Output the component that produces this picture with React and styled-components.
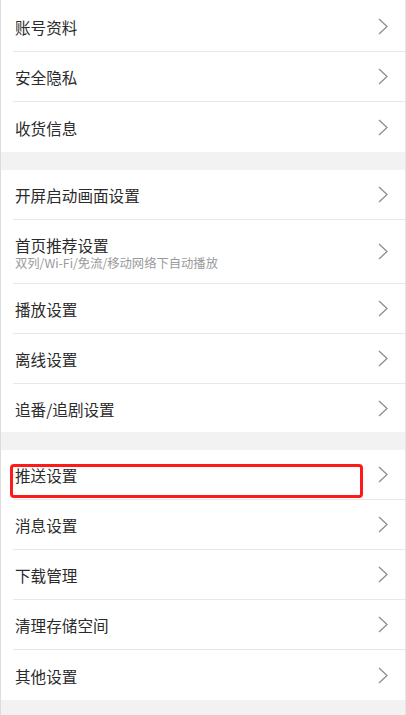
import React from "react";
import styled, { createGlobalStyle } from "styled-components";

const GlobalStyle = createGlobalStyle`
  body {
    margin: 0;
    background: #fff;
    font-family: "Noto Sans CJK SC", "Noto Sans", sans-serif;
  }
`;

const Page = styled.div`
  width: 404px;
  min-height: 715px;
  background: #f2f2f2;
  border-left: 1px solid #dcdcdc;
  border-right: 1px solid #e4e4e4;
  overflow: hidden;
`;

const Section = styled.div`
  background: #fff;
  padding-top: ${(p) => p.$top || 0}px;
  margin-bottom: 18px;
`;

const Item = styled.div`
  position: relative;
  padding-left: 12px;
`;

const ItemBody = styled.div`
  display: flex;
  align-items: center;
  justify-content: space-between;
  height: ${(p) => p.$h}px;
  padding: 0 17px 0 2px;
  border-bottom: ${(p) => (p.$last ? "none" : "1px solid #e8e8e8")};
`;

const TextBlock = styled.div`
  display: flex;
  flex-direction: column;
  padding-top: ${(p) => (p.$sub ? "3px" : "1px")};
`;

const Title = styled.span`
  font-size: 15.6px;
  line-height: 20px;
  color: #2b2b2b;
`;

const Sub = styled.span`
  font-size: 12.3px;
  line-height: 17px;
  color: #9a9a9a;
`;

const Highlight = styled.div`
  position: absolute;
  left: 9px;
  top: 14px;
  width: 347px;
  height: 28px;
  border: 3px solid #ff1a1a;
  border-radius: 4px;
  pointer-events: none;
`;

const Chevron = () => (
  <svg width="10" height="17" viewBox="0 0 10 17">
    <polyline
      points="1,1 9,8.5 1,16"
      fill="none"
      stroke="#8e8e8e"
      strokeWidth="1.3"
      strokeLinejoin="miter"
    />
  </svg>
);

const sections = [
  {
    top: 2,
    items: [{ title: "账号资料" }, { title: "安全隐私" }, { title: "收货信息" }],
  },
  {
    items: [
      { title: "开屏启动画面设置" },
      { title: "首页推荐设置", sub: "双列/Wi-Fi/免流/移动网络下自动播放", h: 64 },
      { title: "播放设置" },
      { title: "离线设置" },
      { title: "追番/追剧设置", h: 48 },
    ],
  },
  {
    items: [
      { title: "推送设置", marked: true },
      { title: "消息设置" },
      { title: "下载管理" },
      { title: "清理存储空间" },
      { title: "其他设置" },
    ],
  },
];

function SettingRow({ item, last }) {
  const h = (item.h || 50) - (last ? 0 : 1);
  return (
    <Item>
      {item.marked && <Highlight />}
      <ItemBody $h={h} $last={last}>
        <TextBlock $sub={!!item.sub}>
          <Title>{item.title}</Title>
          {item.sub && <Sub>{item.sub}</Sub>}
        </TextBlock>
        <Chevron />
      </ItemBody>
    </Item>
  );
}

export default function App() {
  return (
    <>
      <GlobalStyle />
      <Page>
        {sections.map((s, i) => (
          <Section key={i} $top={s.top}>
            {s.items.map((item, j) => (
              <SettingRow key={item.title} item={item} last={j === s.items.length - 1} />
            ))}
          </Section>
        ))}
      </Page>
    </>
  );
}
